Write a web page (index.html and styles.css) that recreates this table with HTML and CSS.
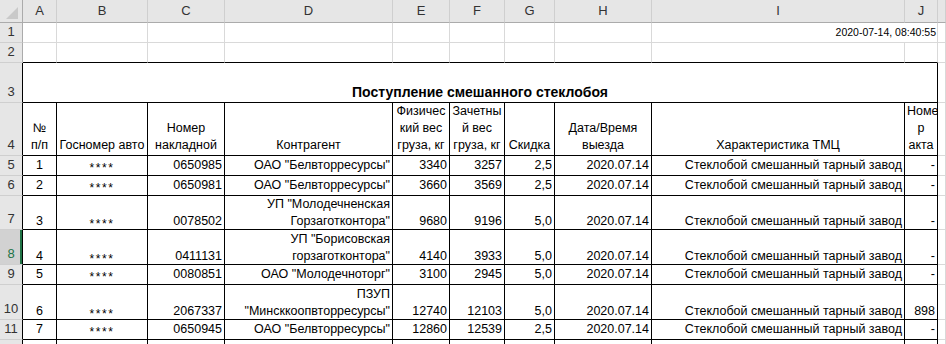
FILE: index.html
```html
<!DOCTYPE html>
<html lang="ru">
<head>
<meta charset="utf-8">
<title>Поступление смешанного стеклобоя</title>
<link rel="stylesheet" href="styles.css">
</head>
<body>
<table class="sheet">
  <colgroup>
    <col class="c-rh"><col class="c-a"><col class="c-b"><col class="c-c"><col class="c-d"><col class="c-e"><col class="c-f"><col class="c-g"><col class="c-h"><col class="c-i"><col class="c-j"><col class="c-k">
  </colgroup>
  <thead>
    <tr class="colhdr">
      <th class="corner"><svg class="tri" width="12" height="12" viewBox="0 0 12 12"><polygon points="12,0 12,12 0,12" fill="#c9c9c9"/></svg></th>
      <th>A</th><th>B</th><th>C</th><th>D</th><th>E</th><th>F</th><th>G</th><th>H</th><th>I</th><th>J</th><th></th>
    </tr>
  </thead>
  <tbody>
    <tr class="h20">
      <th class="rh">1</th>
      <td></td><td></td><td></td><td></td><td></td><td></td><td></td><td></td>
      <td colspan="2" class="stamp">2020-07-14, 08:40:55</td>
      <td class="k"></td>
    </tr>
    <tr class="h20 above">
      <th class="rh">2</th>
      <td></td><td></td><td></td><td></td><td></td><td></td><td></td><td></td><td></td><td></td>
      <td class="k"></td>
    </tr>
    <tr class="h40 tbl">
      <th class="rh">3</th>
      <td colspan="10" class="title">Поступление смешанного стеклобоя</td>
      <td class="k"></td>
    </tr>
    <tr class="h53 tbl hdr">
      <th class="rh">4</th>
      <td class="ctr">№<br>п/п</td>
      <td class="ctr">Госномер авто</td>
      <td class="ctr">Номер<br>накладной</td>
      <td class="ctr">Контрагент</td>
      <td class="ctr">Физичес<br>кий вес<br>груза, кг</td>
      <td class="ctr">Зачетны<br>й вес<br>груза, кг</td>
      <td class="ctr">Скидка</td>
      <td class="ctr">Дата/Время<br>выезда</td>
      <td class="ctr">Характеристика ТМЦ</td>
      <td class="ctr">Номе<br>р<br>акта</td>
      <td class="k"></td>
    </tr>
    <tr class="h20 tbl">
      <th class="rh">5</th>
      <td class="ctr">1</td><td class="ctr"><span class="ast">****</span></td><td>0650985</td><td>ОАО "Белвторресурсы"</td>
      <td>3340</td><td>3257</td><td>2,5</td><td>2020.07.14</td><td>Стеклобой смешанный тарный завод</td><td>-</td>
      <td class="k"></td>
    </tr>
    <tr class="h20 tbl">
      <th class="rh">6</th>
      <td class="ctr">2</td><td class="ctr"><span class="ast">****</span></td><td>0650981</td><td>ОАО "Белвторресурсы"</td>
      <td>3660</td><td>3569</td><td>2,5</td><td>2020.07.14</td><td>Стеклобой смешанный тарный завод</td><td>-</td>
      <td class="k"></td>
    </tr>
    <tr class="h34 tbl">
      <th class="rh">7</th>
      <td class="ctr">3</td><td class="ctr"><span class="ast">****</span></td><td>0078502</td><td>УП "Молодечненская<br>Горзаготконтора"</td>
      <td>9680</td><td>9196</td><td>5,0</td><td>2020.07.14</td><td>Стеклобой смешанный тарный завод</td><td>-</td>
      <td class="k"></td>
    </tr>
    <tr class="h35 tbl">
      <th class="rh sel">8</th>
      <td class="ctr">4</td><td class="ctr"><span class="ast">****</span></td><td>0411131</td><td>УП "Борисовская<br>горзаготконтора"</td>
      <td>4140</td><td>3933</td><td>5,0</td><td>2020.07.14</td><td>Стеклобой смешанный тарный завод</td><td>-</td>
      <td class="k"></td>
    </tr>
    <tr class="h20 tbl">
      <th class="rh">9</th>
      <td class="ctr">5</td><td class="ctr"><span class="ast">****</span></td><td>0080851</td><td>ОАО "Молодечноторг"</td>
      <td>3100</td><td>2945</td><td>5,0</td><td>2020.07.14</td><td>Стеклобой смешанный тарный завод</td><td>-</td>
      <td class="k"></td>
    </tr>
    <tr class="h35 tbl">
      <th class="rh">10</th>
      <td class="ctr">6</td><td class="ctr"><span class="ast">****</span></td><td>2067337</td><td>ПЗУП<br>"Минсккоопвторресурсы"</td>
      <td>12740</td><td>12103</td><td>5,0</td><td>2020.07.14</td><td>Стеклобой смешанный тарный завод</td><td>898</td>
      <td class="k"></td>
    </tr>
    <tr class="h20 tbl">
      <th class="rh">11</th>
      <td class="ctr">7</td><td class="ctr"><span class="ast">****</span></td><td>0650945</td><td>ОАО "Белвторресурсы"</td>
      <td>12860</td><td>12539</td><td>2,5</td><td>2020.07.14</td><td>Стеклобой смешанный тарный завод</td><td>-</td>
      <td class="k"></td>
    </tr>
    <tr class="h20 tbl">
      <th class="rh"></th>
      <td></td><td></td><td></td><td></td><td></td><td></td><td></td><td></td><td></td><td></td>
      <td class="k"></td>
    </tr>
  </tbody>
</table>
</body>
</html>
```

FILE: styles.css
```css
html, body {
  margin: 0;
  padding: 0;
  background: #ffffff;
  overflow: hidden;
}

body {
  font-family: "Liberation Sans", Arial, sans-serif;
  font-size: 12.5px;
  color: #000000;
  width: 946px;
  height: 344px;
}

.sheet {
  border-collapse: separate;
  border-spacing: 0;
  table-layout: fixed;
  width: 946px;
}

.c-rh { width: 23px; }
.c-a { width: 34px; }
.c-b { width: 91px; }
.c-c { width: 77px; }
.c-d { width: 168px; }
.c-e { width: 57px; }
.c-f { width: 55px; }
.c-g { width: 50px; }
.c-h { width: 97px; }
.c-i { width: 253px; }
.c-j { width: 33px; }
.c-k { width: 8px; }

.sheet td,
.sheet th {
  box-sizing: border-box;
  padding: 0 2px 2px 2px;
  border: 0;
  border-right: 1px solid #d9d9d9;
  border-bottom: 1px solid #d9d9d9;
  vertical-align: bottom;
  line-height: 16.5px;
  white-space: nowrap;
  overflow: hidden;
  font-weight: normal;
  text-align: right;
}

/* column header strip */
.sheet .colhdr th {
  height: 23px;
  padding: 0;
  background: #e6e6e6;
  color: #333333;
  font-size: 13px;
  text-align: center;
  vertical-align: middle;
  border-right: 1px solid #cfcfcf;
  border-bottom: 1px solid #ababab;
}

.sheet .colhdr .corner {
  position: relative;
  border-right: 1px solid #ababab;
}

.tri {
  position: absolute;
  right: 4px;
  bottom: 3px;
}

/* row headers */
.sheet .rh {
  background: #e6e6e6;
  color: #333333;
  font-size: 13px;
  text-align: center;
  padding: 0 0 2px 0;
  border-right: 1px solid #ababab;
  border-bottom: 1px solid #cfcfcf;
}

.sheet .tbl .rh {
  border-right-color: #000000;
}

.sheet .rh.sel {
  background: #d2d2d2;
  color: #217346;
  box-shadow: inset -2px 0 0 #217346;
}

/* row heights */
.h20 > * { height: 20px; }
.h34 > * { height: 34px; }
.h35 > * { height: 35px; }
.h40 > * { height: 40px; }
.h53 > * { height: 53px; }

.sheet .h34 > td,
.sheet .h35 > td {
  padding-bottom: 0;
}

/* bordered table area */
.sheet .above > td { border-bottom-color: #000000; }
.sheet .above > td.k { border-bottom-color: #d9d9d9; }

.sheet .tbl > td {
  border-right-color: #000000;
  border-bottom-color: #000000;
}

.sheet .tbl > td.k {
  border-right-color: #d9d9d9;
  border-bottom-color: #d9d9d9;
}

.sheet td.ctr { text-align: center; }

.sheet .hdr td {
  padding-bottom: 1px;
  line-height: 17px;
}

.sheet td.title {
  text-align: center;
  font-weight: bold;
  font-size: 14px;
}

.sheet td.stamp {
  font-size: 10.5px;
  padding-right: 1px;
}

.ast {
  font-size: 12px;
  line-height: 10px;
  letter-spacing: 1.6px;
  vertical-align: -3px;
}
```
